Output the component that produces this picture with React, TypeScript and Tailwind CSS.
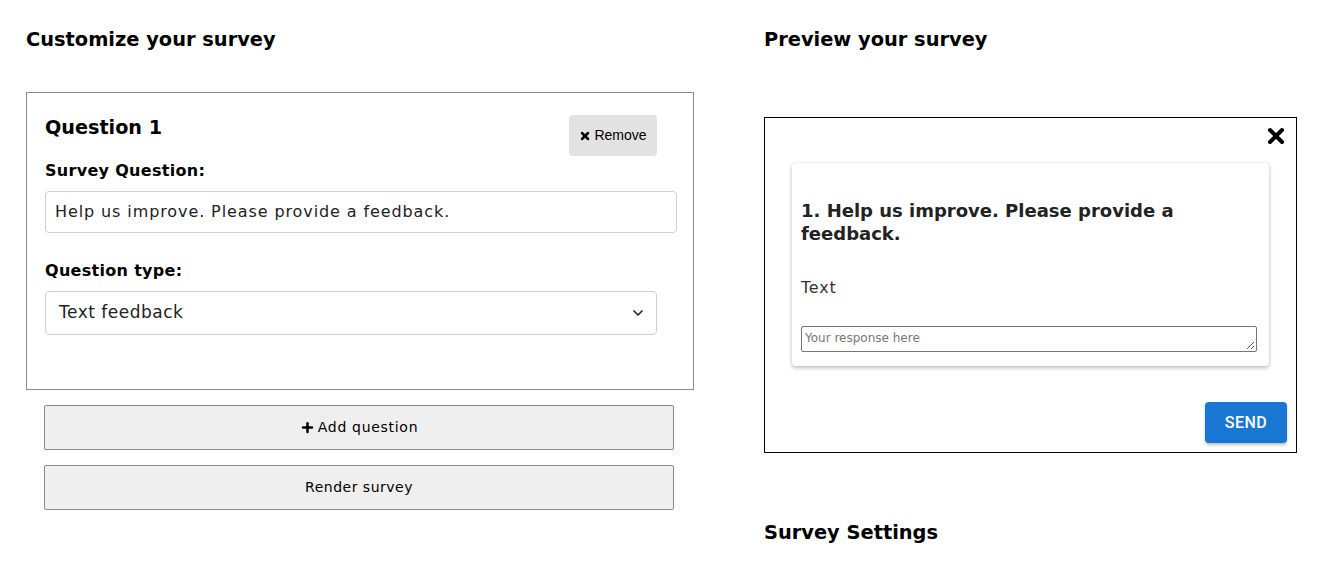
import { X, Plus, ChevronDown } from "lucide-react";

const font = "font-['DejaVu_Sans','Inter',sans-serif]";

function QuestionEditor() {
  return (
    <div className="relative h-[298px] border border-[#8a8a8a] px-[18px] pt-[21px]">
      <div className="flex items-start justify-between">
        <h3 className="text-[19.2px] font-bold leading-[28px] text-black">Question 1</h3>
        <button className="absolute right-[36px] top-[22px] flex h-[41px] w-[88px] items-center justify-center gap-[3px] rounded-[4px] bg-[#e2e2e2] font-['Liberation_Sans',Arial,sans-serif] text-[14px] text-black">
          <X size={12} strokeWidth={5} />
          Remove
        </button>
      </div>
      <label className="mt-[18px] block text-[16px] font-bold leading-[22px] tracking-[0.3px] text-black">Survey Question:</label>
      <div className="mt-[9px] flex h-[42px] w-[632px] items-center rounded-[4px] border border-[#cfcfcf] px-[9px] text-[16px] tracking-[0.9px] text-[#222]">
        Help us improve. Please provide a feedback.
      </div>
      <label className="mt-[27px] block text-[16px] font-bold leading-[22px] tracking-[0.3px] text-black">Question type:</label>
      <div className="mt-[9px] flex h-[44px] w-[612px] items-center justify-between rounded-[4px] border border-[#cfcfcf] pl-[13px] pr-[10px] text-[17px] tracking-[0.5px] text-[#222]">
        Text feedback
        <ChevronDown size={16} strokeWidth={2.5} />
      </div>
    </div>
  );
}

function PreviewBox() {
  return (
    <div className="relative h-[336px] w-[533px] border border-black">
      <X className="absolute right-[8px] top-[6px]" size={24} strokeWidth={4} />
      <div className="ml-[27px] mt-[45px] h-[203px] w-[477px] rounded-[4px] bg-white px-[9px] pt-[36px] shadow-[0_2px_4px_rgba(0,0,0,0.25),0_0_2px_rgba(0,0,0,0.1)]">
        <h4 className="text-[18px] font-bold leading-[23px] text-[#222]">
          1. Help us improve. Please provide a feedback.
        </h4>
        <p className="mt-[33px] text-[16px] leading-[20px] tracking-[0.8px] text-[#333]">Text</p>
        <div className="relative mt-[28px] h-[26px] w-[456px] rounded-[2px] border border-[#767676] px-[3px] text-[12px] leading-[22px] text-[#777]">
          Your response here
          <svg className="absolute bottom-[1px] right-[1px]" width="9" height="9" viewBox="0 0 9 9">
            <path d="M8 1L1 8M8 5L5 8" stroke="#555" strokeWidth="1" />
          </svg>
        </div>
      </div>
      <button className="absolute bottom-[9px] right-[9px] h-[41px] w-[82px] rounded-[4px] bg-[#1976d2] font-['Roboto',sans-serif] text-[16px] font-medium tracking-[0.5px] text-white shadow-[0_2px_3px_rgba(0,0,0,0.25)]">
        SEND
      </button>
    </div>
  );
}

export default function App() {
  return (
    <div className={`flex h-[566px] w-[1330px] bg-white ${font}`}>
      <div className="w-[764px] shrink-0 pl-[26px] pt-[26px]">
        <h2 className="text-[19.4px] font-bold leading-[28px] text-black">Customize your survey</h2>
        <div className="mt-[38px] w-[668px]">
          <QuestionEditor />
        </div>
        <div className="ml-[18px] mt-[15px] flex w-[630px] flex-col gap-[15px]">
          <button className="flex h-[45px] items-center justify-center gap-[3px] rounded-[2px] border border-[#8a8a8a] bg-[#efefef] text-[14px] tracking-[0.7px] text-black">
            <Plus size={15} strokeWidth={4} />
            Add question
          </button>
          <button className="flex h-[45px] items-center justify-center rounded-[2px] border border-[#8a8a8a] bg-[#efefef] text-[14px] tracking-[0.5px] text-black">
            Render survey
          </button>
        </div>
      </div>
      <div className="pt-[26px]">
        <h2 className="text-[19.4px] font-bold leading-[28px] text-black">Preview your survey</h2>
        <div className="mt-[63px]">
          <PreviewBox />
        </div>
        <h2 className="mt-[66px] text-[19.4px] font-bold leading-[28px] text-black">Survey Settings</h2>
      </div>
    </div>
  );
}
